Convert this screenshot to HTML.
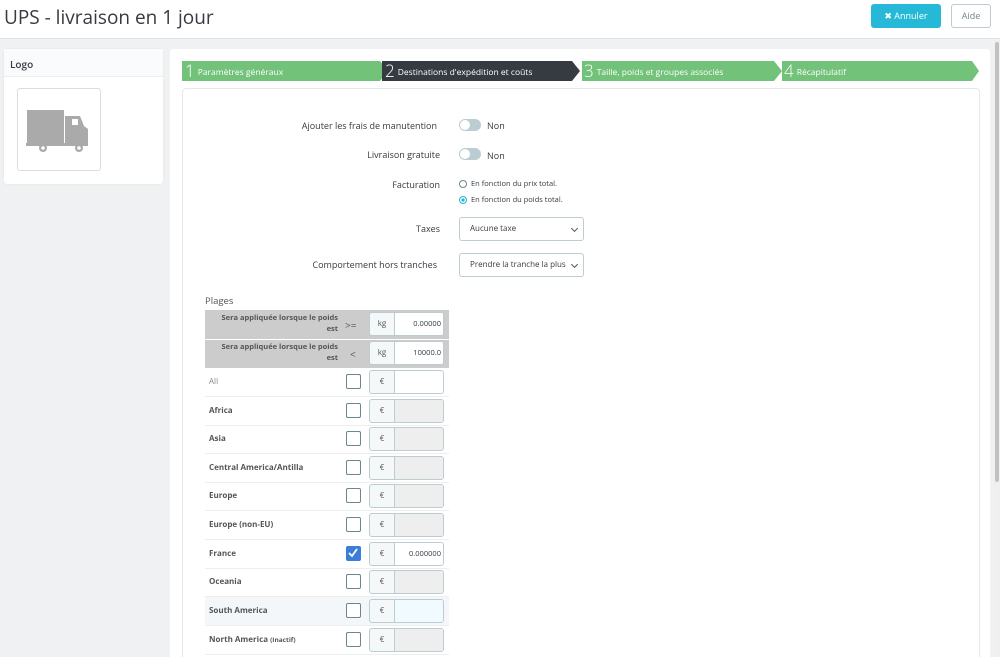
<!DOCTYPE html>
<html><head><meta charset="utf-8"><style>
*{box-sizing:border-box;margin:0;padding:0}
html,body{width:1000px;height:657px;overflow:hidden}
body{background:#eff1f2;font-family:"Open Sans","Liberation Sans",sans-serif;color:#363a41;position:relative;font-size:9px}
.a{position:absolute}
.hdr{left:0;top:0;width:1000px;height:39px;background:#fff;border-bottom:1px solid #dfe2e5}
.step{height:20px;top:61px;color:#fff;font-size:8.5px;line-height:20px;white-space:nowrap}
.step b{font-weight:300;font-size:17px;vertical-align:-2px;margin:0 3px 0 3px}
.lbl{font-size:9px;text-align:right;right:0}
.tog{width:22px;height:12px;border-radius:6px;background:#bbcdd2}
.tog:after{content:"";position:absolute;left:1px;top:1px;width:10px;height:10px;border-radius:50%;background:#fff}
.sel{border:1px solid #bbcdd2;border-radius:3px;background:#fff;font-size:8px;height:24px;line-height:22px;padding-left:10px;color:#363a41;overflow:hidden;white-space:nowrap}
.sel span{display:block;overflow:hidden;width:100%}
.sel:after{content:"";position:absolute;right:6px;top:8px;width:4px;height:4px;border-right:1px solid #555;border-bottom:1px solid #555;transform:rotate(45deg);background:#fff}
.row{left:205px;width:244px;height:29px;border-bottom:1px solid #eee}
.row .n{position:absolute;left:4px;top:8px;font-weight:bold;font-size:8px;color:#555}
.cb{position:absolute;left:141px;top:6px;width:15px;height:15px;border:1.5px solid #6c868e;border-radius:2px;background:#fff}
.ig{position:absolute;left:164px;top:2px;width:75px;height:24px;border:1px solid #bbcdd2;border-radius:3px;overflow:hidden;background:#f5f8f9}
.ig .ad{position:absolute;left:0;top:0;width:25px;height:22px;border-right:1px solid #bbcdd2;text-align:center;line-height:22px;font-size:8px;color:#555}
.ig .in{position:absolute;left:25px;top:0;right:0;height:22px;background:#eee;font-size:7.5px;line-height:22px;text-align:right;padding-right:2px;overflow:hidden}
</style></head><body>
<div class="a hdr"></div>
<div class="a" style="left:4px;top:4px;font-size:19px;color:#363a41">UPS - livraison en 1 jour</div>
<div class="a" style="left:871px;top:4px;width:70px;height:24px;background:#25b9d7;border-radius:3px;color:#fff;font-size:9px;line-height:24px;text-align:center">✖ Annuler</div>
<div class="a" style="left:951px;top:4px;width:40px;height:24px;background:#fff;border:1px solid #bbcdd2;border-radius:3px;color:#6c868e;font-size:9px;line-height:22px;text-align:center">Aide</div>
<div class="a" style="left:994px;top:40px;width:6px;height:617px;background:#f0f0f0"></div>
<div class="a" style="left:995px;top:42px;width:4px;height:440px;background:#c1c1c1;border-radius:2px"></div>

<div class="a" style="left:4px;top:49px;width:159px;height:135px;background:#fff;border-radius:3px;box-shadow:0 0 2px #dfe2e5"></div>
<div class="a" style="left:4px;top:49px;width:159px;height:28px;background:#fafbfc;border-bottom:1px solid #eee;font-weight:600;font-size:10px;padding:8px 6px">Logo</div>
<div class="a" style="left:17px;top:88px;width:84px;height:83px;border:1px solid #ddd;border-radius:3px;background:#fff">
<svg width="84" height="83" viewBox="0 0 84 83" style="position:absolute;left:-1px;top:-1px"><g fill="#aaa"><rect x="10" y="22" width="37" height="33"/><path d="M48 28h15l4 10 4 3v15H48z"/><rect x="9" y="55" width="62" height="3"/><circle cx="26" cy="60" r="4"/><circle cx="62" cy="60" r="4"/></g><circle cx="26" cy="60" r="1.8" fill="#fff"/><circle cx="62" cy="60" r="1.8" fill="#fff"/><rect x="55" y="31" width="6" height="6" fill="#fff"/></svg></div>

<div class="a" style="left:170px;top:49px;width:820px;height:620px;background:#fff;border-radius:3px"></div>
<svg class="a" style="left:182px;top:61px" width="800" height="20">
<polygon points="0,0 198,0 206,10 198,20 0,20" fill="#72c279"/>
<polygon points="200,0 390,0 398,10 390,20 200,20" fill="#363a41"/>
<polygon points="400,0 592,0 600,10 592,20 400,20" fill="#72c279"/>
<polygon points="600,0 790,0 797,10 790,20 600,20" fill="#72c279"/>
</svg>
<div class="a step" style="left:182px"><b>1</b>Paramètres généraux</div>
<div class="a step" style="left:382px"><b>2</b>Destinations d'expédition et coûts</div>
<div class="a step" style="left:581px"><b>3</b>Taille, poids et groupes associés</div>
<div class="a step" style="left:781px"><b>4</b>Récapitulatif</div>

<div class="a" style="left:182px;top:88px;width:798px;height:580px;border:1px solid #e5e8ea;border-radius:4px"></div>

<div class="a lbl" style="left:200px;width:237px;top:119px">Ajouter les frais de manutention</div>
<div class="a tog" style="left:459px;top:119px"></div><div class="a" style="left:487px;top:119px">Non</div>
<div class="a lbl" style="left:200px;width:240px;top:148px">Livraison gratuite</div>
<div class="a tog" style="left:459px;top:148px"></div><div class="a" style="left:487px;top:149px">Non</div>
<div class="a lbl" style="left:200px;width:240px;top:178px">Facturation</div>
<div class="a" style="left:459px;top:180px;width:8px;height:8px;border:1px solid #6c868e;border-radius:50%"></div>
<div class="a" style="left:471px;top:179px;font-size:7.5px">En fonction du prix total.</div>
<div class="a" style="left:459px;top:196px;width:8px;height:8px;border:1px solid #25b9d7;border-radius:50%;background:radial-gradient(#25b9d7 35%,#fff 45%)"></div>
<div class="a" style="left:471px;top:195px;font-size:7.5px">En fonction du poids total.</div>
<div class="a lbl" style="left:200px;width:240px;top:222px">Taxes</div>
<div class="a sel" style="left:459px;top:217px;width:125px">Aucune taxe</div>
<div class="a lbl" style="left:200px;width:237px;top:258px">Comportement hors tranches</div>
<div class="a sel" style="left:459px;top:253px;width:125px;padding-left:10px;padding-right:16px"><span>Prendre la tranche la plus grande</span></div>

<div class="a" style="left:205px;top:294px;font-size:9.5px;color:#555">Plages</div>
<div class="a" style="left:205px;top:310px;width:244px;height:58px;background:#ccc"></div>
<div class="a" style="left:205px;top:339px;width:244px;height:1px;background:#fff"></div>
<div class="a" style="left:205px;top:313px;width:133px;text-align:right;font-weight:bold;font-size:7.5px;color:#555;line-height:11px">Sera appliquée lorsque le poids<br>est</div>
<div class="a" style="left:205px;top:342px;width:133px;text-align:right;font-weight:bold;font-size:7.5px;color:#555;line-height:11px">Sera appliquée lorsque le poids<br>est</div>
<div class="a" style="left:345px;top:318px;font-size:10px;color:#555">&gt;=</div>
<div class="a" style="left:350px;top:347px;font-size:10px;color:#555">&lt;</div>
<div class="a ig" style="left:369px;top:312px;width:75px"><div class="ad">kg</div><div class="in" style="background:#fff">0.00000</div></div>
<div class="a ig" style="left:369px;top:341px;width:75px"><div class="ad">kg</div><div class="in" style="background:#fff">10000.0</div></div>

<div class="a row" style="top:368px"><div class="n" style="font-weight:normal;color:#888">All</div><div class="cb"></div><div class="ig"><div class="ad">€</div><div class="in" style="background:#fff"></div></div></div>
<div class="a row" style="top:397px"><div class="n">Africa</div><div class="cb"></div><div class="ig"><div class="ad">€</div><div class="in"></div></div></div>
<div class="a row" style="top:425px"><div class="n">Asia</div><div class="cb"></div><div class="ig"><div class="ad">€</div><div class="in"></div></div></div>
<div class="a row" style="top:454px"><div class="n">Central America/Antilla</div><div class="cb"></div><div class="ig"><div class="ad">€</div><div class="in"></div></div></div>
<div class="a row" style="top:482px"><div class="n">Europe</div><div class="cb"></div><div class="ig"><div class="ad">€</div><div class="in"></div></div></div>
<div class="a row" style="top:511px"><div class="n">Europe (non-EU)</div><div class="cb"></div><div class="ig"><div class="ad">€</div><div class="in"></div></div></div>
<div class="a row" style="top:540px"><div class="n">France</div><div class="cb" style="background:#3b7dd8;border-color:#3b7dd8"><svg width="12" height="12" style="position:absolute;left:0;top:0"><path d="M2 6l3 3 5-7" stroke="#fff" stroke-width="1.8" fill="none"/></svg></div><div class="ig"><div class="ad">€</div><div class="in" style="background:#fff">0.000000</div></div></div>
<div class="a row" style="top:568px"><div class="n">Oceania</div><div class="cb"></div><div class="ig"><div class="ad">€</div><div class="in"></div></div></div>
<div class="a row" style="top:597px;background:#f3f7f9"><div class="n">South America</div><div class="cb"></div><div class="ig"><div class="ad">€</div><div class="in" style="background:#f0faff"></div></div></div>
<div class="a row" style="top:626px"><div class="n">North America <span style="font-size:6.5px">(Inactif)</span></div><div class="cb"></div><div class="ig"><div class="ad">€</div><div class="in"></div></div></div>
</body></html>
